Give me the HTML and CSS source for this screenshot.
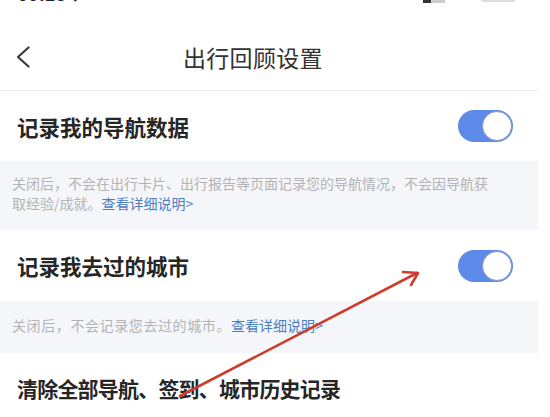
FILE: index.html
```html
<!DOCTYPE html>
<html lang="zh-CN">
<head>
<meta charset="utf-8">
<link rel="stylesheet" href="styles.css">
</head>
<body>
<div class="page">
  <div class="status">
    <span class="time">09:25 ⁊</span>
    <span class="icons"><span class="sig"></span><span class="bat"></span></span>
  </div>
  <div class="nav">
    <svg class="back" width="14" height="22" viewBox="0 0 14 22"><polyline points="12.5,1.5 2,11 12.5,20.5" fill="none" stroke="#3a3a3a" stroke-width="2.2" stroke-linecap="round" stroke-linejoin="round"/></svg>
    <div class="title">出行回顾设置</div>
  </div>
  <div class="row">
    <span class="label">记录我的导航数据</span>
    <span class="toggle"><span class="knob"></span></span>
  </div>
  <div class="note note-two">关闭后，不会在出行卡片、出行报告等页面记录您的导航情况，不会因导航获取经验/成就。<span class="link">查看详细说明&gt;</span></div>
  <div class="row row-b">
    <span class="label">记录我去过的城市</span>
    <span class="toggle"><span class="knob"></span></span>
  </div>
  <div class="note note-one"><span class="wide">关闭后，不会记录您去过的城市。</span><span class="link">查看详细说明&gt;</span></div>
  <div class="row">
    <span class="label label-tight">清除全部导航、签到、城市历史记录</span>
  </div>
  <svg class="arrow" width="550" height="417" viewBox="0 0 550 417">
    <line x1="180" y1="396" x2="417" y2="273" stroke="#cf3b2c" stroke-width="2.6" stroke-linecap="round"/>
    <polyline points="403,272 418,273 411,285" fill="none" stroke="#cf3b2c" stroke-width="2.6" stroke-linecap="round" stroke-linejoin="round"/>
  </svg>
</div>
</body>
</html>
```
FILE: styles.css
```css
* { box-sizing: border-box; }
html, body { margin: 0; padding: 0; background: #fff; }
body {
  font-family: "Noto Sans CJK SC", "Noto Sans", sans-serif;
  width: 550px;
  height: 417px;
  overflow: hidden;
}
.page {
  position: relative;
  width: 538px;
  height: 417px;
}
.status {
  height: 4px;
  overflow: hidden;
  display: flex;
  justify-content: space-between;
  padding: 0 23px 0 18px;
}
.time {
  font-family: "Liberation Sans", sans-serif;
  font-weight: 700;
  font-size: 17px;
  line-height: 17px;
  margin-top: -13px;
  color: #222;
  letter-spacing: 1px;
}
.icons { display: flex; gap: 36px; align-items: flex-start; }
.sig { width: 22px; height: 3px; background: linear-gradient(90deg, #333 0 8px, #ccc 8px); }
.bat { width: 34px; height: 2px; background: #ddd; border-radius: 0 0 3px 3px; }
.nav {
  height: 87px;
  padding-top: 20px;
  display: flex;
  align-items: center;
  border-bottom: 1px solid #e9e9eb;
}
.back { margin-left: 16px; flex: none; }
.title {
  margin-left: 153px;
  font-size: 23px;
  color: #333;
  letter-spacing: 0.3px;
}
.row {
  height: 70px;
  display: flex;
  align-items: center;
  justify-content: space-between;
  padding: 0 25px 0 17px;
}
.row-b { height: 71px; }
.label {
  font-size: 21.5px;
  font-weight: 600;
  color: #262626;
}
.label-tight { font-size: 21px; letter-spacing: -0.8px; }
.toggle {
  width: 55px;
  height: 32px;
  border-radius: 16px;
  background: #5d8ae8;
  display: flex;
  justify-content: flex-end;
  align-items: center;
  padding-right: 1px;
}
.knob {
  width: 30px;
  height: 30px;
  border-radius: 50%;
  background: #fff;
  border: 1.5px solid #8d9cc0;
}
.note {
  background: #f5f6f9;
  color: #b3b3b6;
  font-size: 14px;
  line-height: 20px;
  padding: 0 40px 0 12px;
}
.note-two { height: 69px; padding-top: 12px; }
.note-one { height: 52px; padding-top: 14px; }
.wide { letter-spacing: 0.6px; }
.link { color: #4b7dc4; }
.arrow {
  position: absolute;
  left: 0;
  top: 0;
  pointer-events: none;
}
```
